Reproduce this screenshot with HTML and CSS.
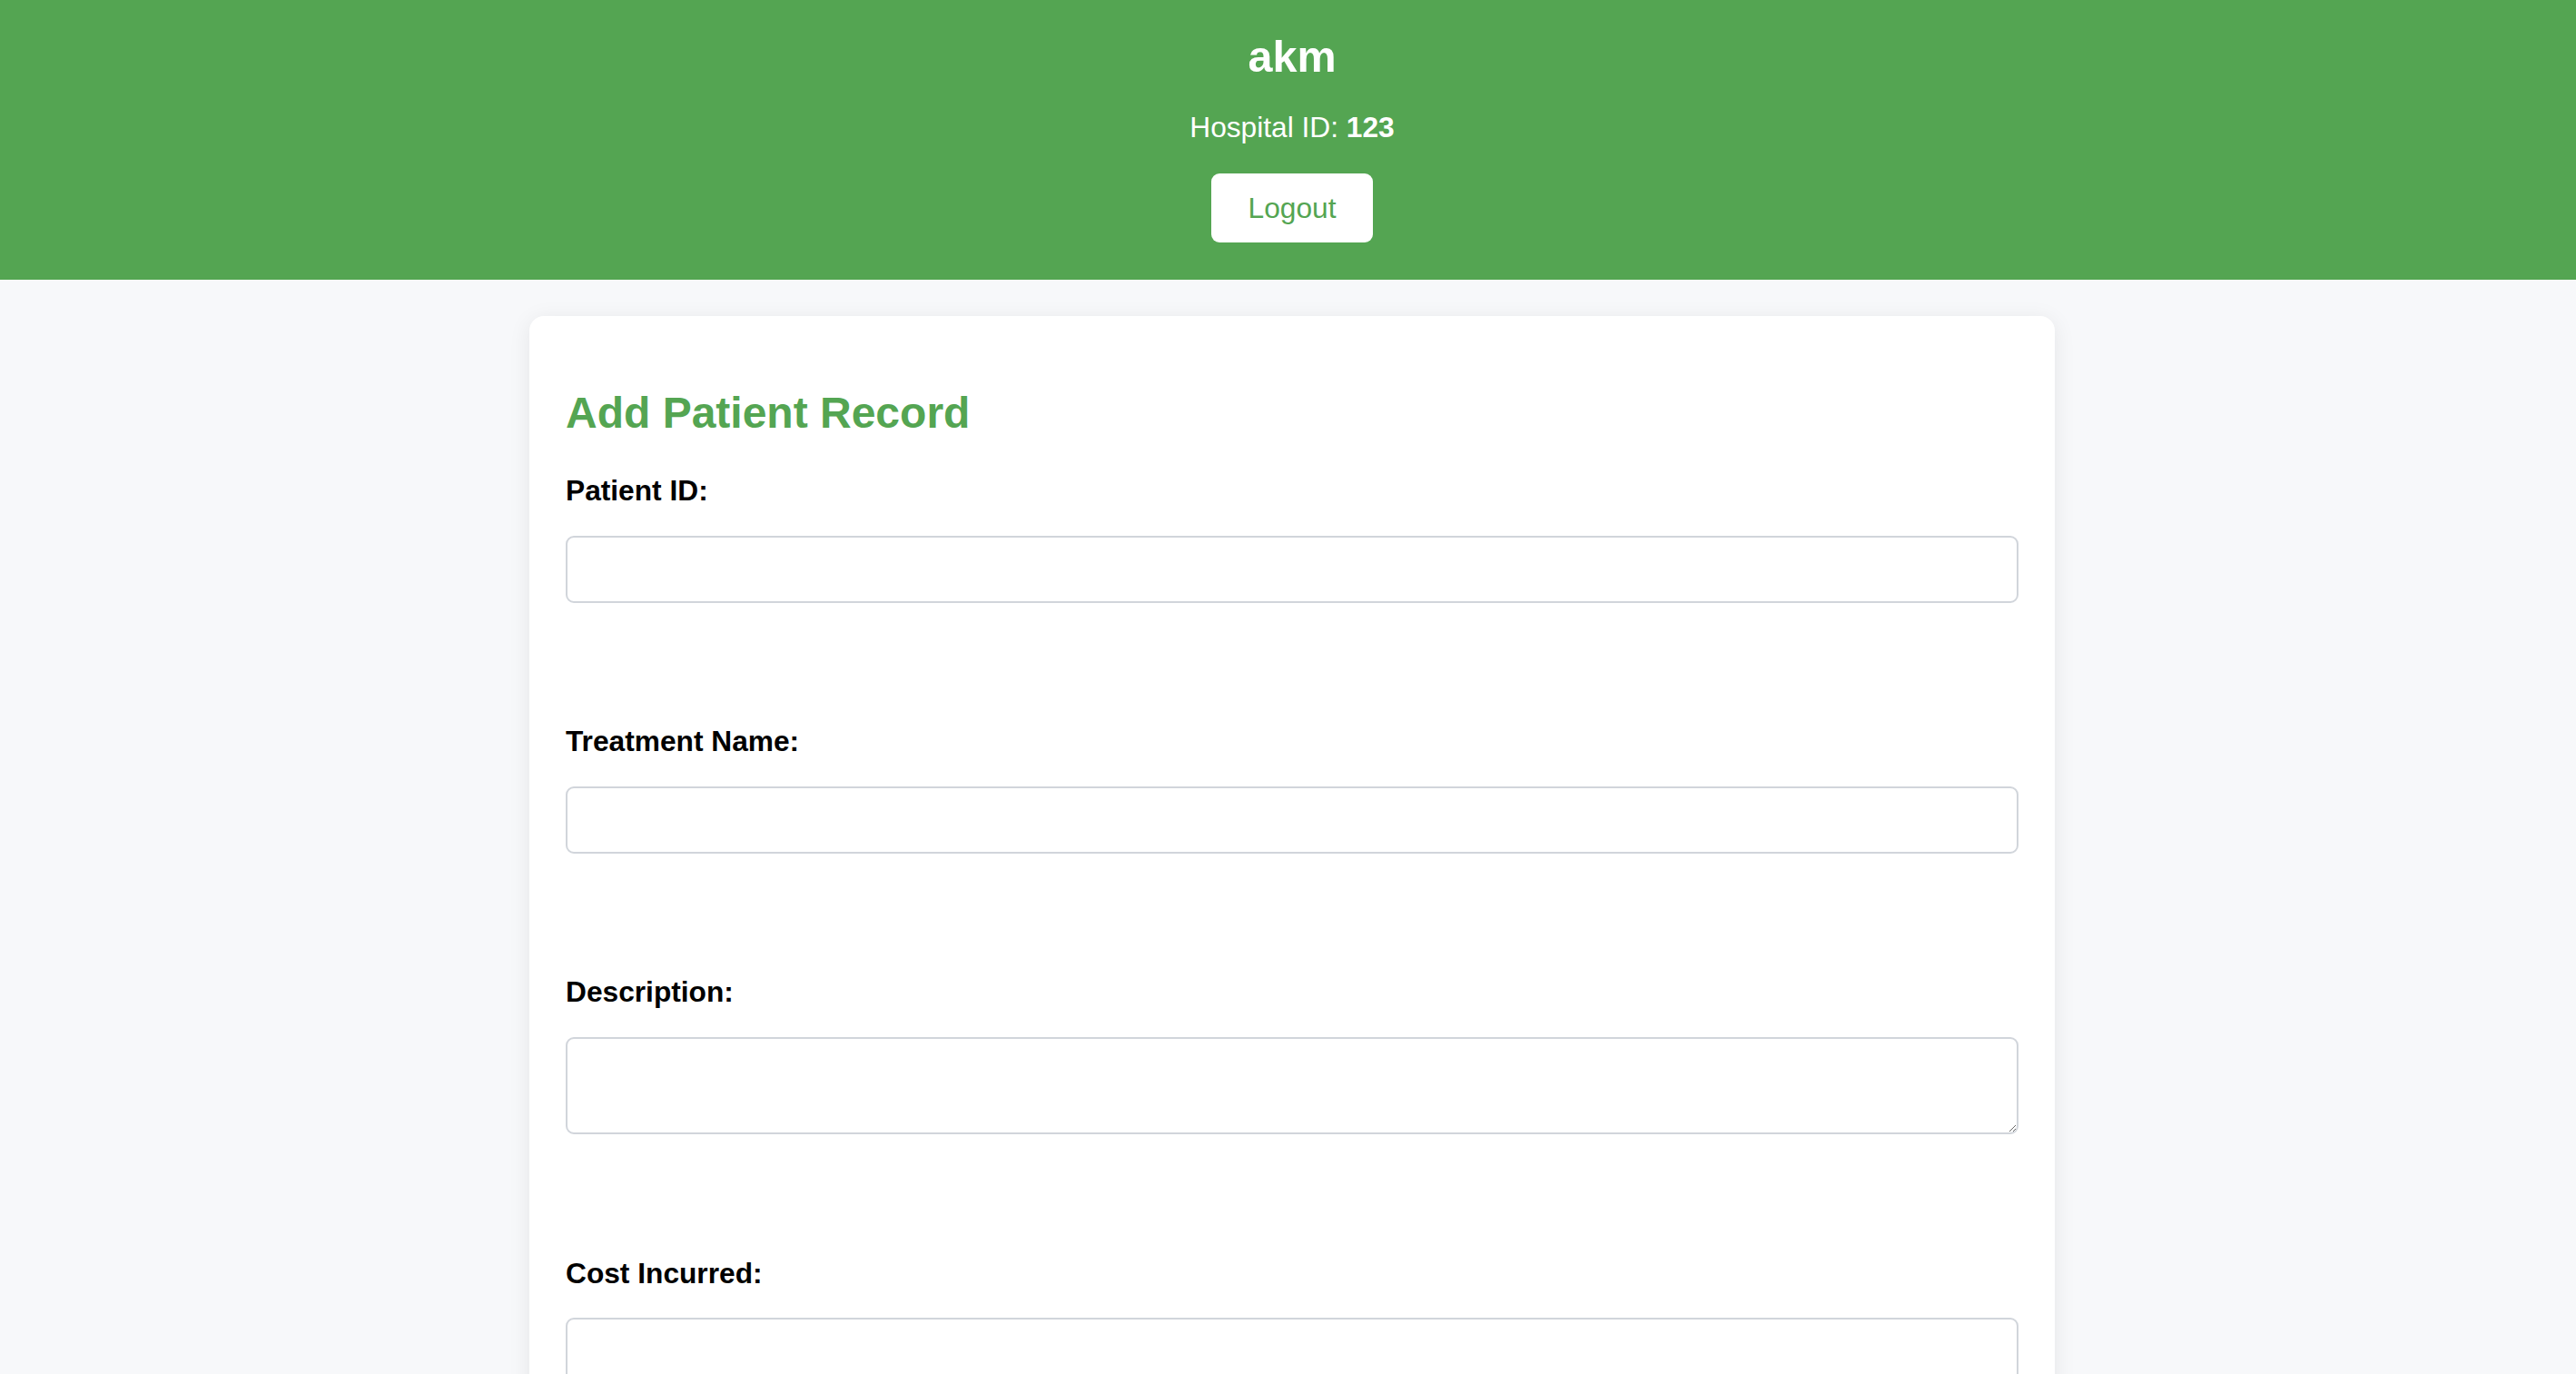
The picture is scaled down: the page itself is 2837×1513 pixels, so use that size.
FILE: index.html
```html
<!DOCTYPE html>
<html lang="en">
<head>
<meta charset="utf-8">
<title>Add Patient Record</title>
<link rel="stylesheet" href="styles.css">
</head>
<body>
<header class="topbar">
  <h1 class="hospital-name">akm</h1>
  <p class="hospital-id">Hospital ID: <strong>123</strong></p>
  <button class="logout-btn" type="button">Logout</button>
</header>
<main class="content">
  <section class="card">
    <h2 class="card-title">Add Patient Record</h2>
    <form class="record-form">
      <div class="form-group">
        <label class="field-label" for="pid">Patient ID:</label>
        <input class="field-input" id="pid" type="text">
      </div>
      <div class="form-group">
        <label class="field-label" for="tname">Treatment Name:</label>
        <input class="field-input" id="tname" type="text">
      </div>
      <div class="form-group">
        <label class="field-label" for="desc">Description:</label>
        <textarea class="field-input field-textarea" id="desc" rows="2"></textarea>
      </div>
      <div class="form-group">
        <label class="field-label" for="cost">Cost Incurred:</label>
        <input class="field-input" id="cost" type="number">
      </div>
    </form>
  </section>
</main>
</body>
</html>
```

FILE: styles.css
```css
html, body {
  margin: 0;
  padding: 0;
}

body {
  background: #f7f8fa;
  font-family: "Liberation Sans", Arial, sans-serif;
  color: #000;
}

.topbar {
  background: #54a552;
  color: #fff;
  display: flex;
  flex-direction: column;
  align-items: center;
  padding: 33.5px 0 41.2px 9px;
}

.hospital-name {
  margin: 0;
  font-size: 48.5px;
  font-weight: bold;
  line-height: normal;
}

.hospital-id {
  margin: 32.3px 0 0;
  font-size: 31.7px;
  line-height: normal;
}

.logout-btn {
  margin-top: 32.5px;
  height: 76px;
  padding: 0 40.5px;
  border: none;
  border-radius: 9px;
  background: #fff;
  color: #54a552;
  font-family: "Liberation Sans", Arial, sans-serif;
  font-size: 31.7px;
  cursor: pointer;
}

.content {
  padding-left: 9px;
}

.card {
  box-sizing: border-box;
  width: 1680px;
  margin: 40px auto 0;
  padding: 40px;
  background: #fff;
  border-radius: 16px;
  box-shadow: 0 4px 24px rgba(0, 0, 0, 0.08);
}

.card-title {
  margin: 38.8px 0 40px;
  font-size: 48px;
  font-weight: bold;
  line-height: normal;
  color: #54a552;
}

.record-form {
  display: flex;
  flex-direction: column;
}

.form-group {
  display: flex;
  flex-direction: column;
  gap: 30.5px;
  margin-bottom: 134.6px;
}

.field-label {
  font-size: 31.7px;
  font-weight: bold;
  line-height: normal;
}

.field-input {
  box-sizing: border-box;
  display: block;
  width: 100%;
  height: 74px;
  padding: 18px;
  border: 2px solid #d1d5db;
  border-radius: 9px;
  background: #fff;
  font-family: "Liberation Sans", Arial, sans-serif;
  font-size: 28.8px;
  margin: 0;
}

.field-textarea {
  height: 107px;
}
```
